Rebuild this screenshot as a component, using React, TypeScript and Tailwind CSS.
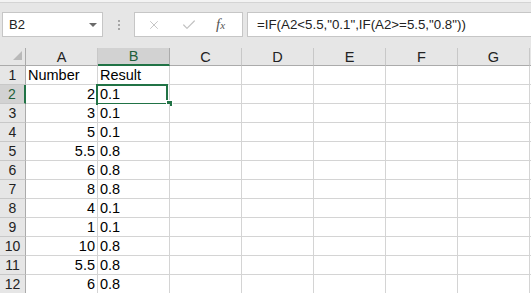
import { X, Check } from "lucide-react";

const COLS = ["A", "B", "C", "D", "E", "F", "G"];

const ROWS: [string, string][] = [
  ["Number", "Result"],
  ["2", "0.1"],
  ["3", "0.1"],
  ["5", "0.1"],
  ["5.5", "0.8"],
  ["6", "0.8"],
  ["8", "0.8"],
  ["4", "0.1"],
  ["1", "0.1"],
  ["10", "0.8"],
  ["5.5", "0.8"],
  ["6", "0.8"],
];

function FormulaBar() {
  return (
    <div className="flex flex-col bg-[#e6e6e6]">
      <div className="h-[3px] bg-[#f3f3f3] border-b border-[#d4d4d4]" />
      <div className="flex items-start h-[45px] pt-[9px]">
        {/* name box */}
        <div className="ml-[2px] w-[101px] h-[25px] bg-white border border-[#c6c6c6] flex items-center justify-between pl-[6px] pr-[5px]">
          <span className="text-[13px] text-[#222]">B2</span>
          <div className="w-0 h-0 border-l-[4px] border-r-[4px] border-t-[4px] border-l-transparent border-r-transparent border-t-[#6a6a6a]" />
        </div>
        <div className="w-[31px] h-[25px] flex flex-col items-center justify-center gap-[2px]">
          <div className="w-[2px] h-[2px] bg-[#a6a6a6]" />
          <div className="w-[2px] h-[2px] bg-[#a6a6a6]" />
          <div className="w-[2px] h-[2px] bg-[#a6a6a6]" />
        </div>
        {/* cancel / enter / fx */}
        <div className="w-[109px] h-[25px] bg-white border border-[#c6c6c6] flex items-center pl-[12px]">
          <X className="w-[14px] h-[14px] text-[#c2c2c2]" strokeWidth={1.6} />
          <Check className="w-[16px] h-[16px] ml-[20px] text-[#c2c2c2]" strokeWidth={1.8} />
          <span className="ml-[19px] font-['Liberation_Serif',serif] italic text-[#555] text-[15px] leading-none">
            f<span className="text-[11px]">x</span>
          </span>
        </div>
        <div className="ml-[4px] flex-1 h-[25px] bg-white border border-[#c6c6c6] border-r-0 flex items-center pl-[9px]">
          <span className="text-[13.3px] text-[#222] whitespace-nowrap">
            =IF(A2&lt;5.5,"0.1",IF(A2&gt;=5.5,"0.8"))
          </span>
        </div>
      </div>
    </div>
  );
}

function HeaderRow() {
  return (
    <div className="flex h-[18px]">
      <div className="relative w-[26px] shrink-0 bg-[#e6e6e6] border-r border-b border-[#ababab]">
        <svg className="absolute right-[3px] bottom-[5px]" width="9" height="9" viewBox="0 0 9 9">
          <polygon points="9,0 9,9 0,9" fill="#b9b9b9" />
        </svg>
      </div>
      {COLS.map((c) => (
        <div
          key={c}
          className={
            c === "B"
              ? "w-[72px] shrink-0 bg-[#d2d2d2] border-r border-[#ababab] border-b-2 border-b-[#217346] flex items-center justify-center pt-[2px] text-[14.5px] text-[#1f5f3b]"
              : "w-[72px] shrink-0 bg-[#e6e6e6] border-r border-b border-r-[#c8c8c8] border-b-[#ababab] flex items-center justify-center pt-[2px] text-[14.5px] text-[#222]"
          }
        >
          {c}
        </div>
      ))}
      <div className="flex-1 bg-[#e6e6e6] border-b border-[#ababab]" />
    </div>
  );
}

function DataRow({ n, a, b }: { n: number; a: string; b: string }) {
  const selected = n === 2;
  return (
    <div className="flex h-[19px]">
      <div
        className={
          selected
            ? "w-[26px] shrink-0 bg-[#d2d2d2] border-b border-b-[#c8c8c8] border-r-2 border-r-[#217346] flex items-center justify-center pt-[1px] text-[14px] text-[#1f5f3b]"
            : "w-[26px] shrink-0 bg-[#e6e6e6] border-b border-r border-b-[#c8c8c8] border-r-[#ababab] flex items-center justify-center pt-[1px] text-[14px] text-[#222]"
        }
      >
        {n}
      </div>
      <div
        className={
          n === 1
            ? "w-[72px] shrink-0 bg-white border-r border-b border-[#d4d4d4] flex items-center pl-[2px] pt-[1px] text-[14.5px] text-black"
            : "w-[72px] shrink-0 bg-white border-r border-b border-[#d4d4d4] flex items-center justify-end pr-[2px] pt-[1px] text-[14.5px] text-black"
        }
      >
        {a}
      </div>
      <div className="relative w-[72px] shrink-0 bg-white border-r border-b border-[#d4d4d4] flex items-center pl-[2px] pt-[1px] text-[14.5px] text-black">
        {b}
        {selected && (
          <>
            <div className="absolute left-[-2px] top-[-1px] right-[1px] bottom-[-2px] border-2 border-[#217346]" />
            <div className="absolute left-[68px] top-[15px] w-[7px] h-[7px] bg-[#217346] border border-white" />
          </>
        )}
      </div>
      {COLS.slice(2).map((c) => (
        <div key={c} className="w-[72px] shrink-0 bg-white border-r border-b border-[#d4d4d4]" />
      ))}
      <div className="flex-1 bg-white border-b border-[#d4d4d4]" />
    </div>
  );
}

export default function App() {
  return (
    <div className="w-[531px] h-[293px] overflow-hidden bg-white font-['Liberation_Sans',Arial,sans-serif]">
      <FormulaBar />
      <HeaderRow />
      {ROWS.map(([a, b], i) => (
        <DataRow key={i} n={i + 1} a={a} b={b} />
      ))}
    </div>
  );
}
